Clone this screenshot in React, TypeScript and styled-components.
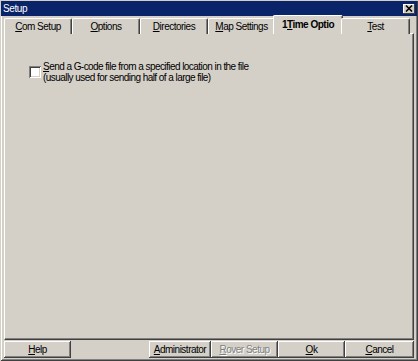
import React from "react";
import styled, { createGlobalStyle, css } from "styled-components";

const Global = createGlobalStyle`
  html, body { margin: 0; padding: 0; background: #d4d0c8; }
  body { font-family: "Liberation Sans", Arial, sans-serif; font-size: 10px; color: #000; }
`;

const Window = styled.div`
  width: 418px;
  height: 361px;
  box-sizing: border-box;
  background: #d4d0c8;
  display: flex;
  flex-direction: column;
  padding: 1px 1px 3px 1px;
  box-shadow: inset 1px 1px 0 #d4d0c8, inset -1px -1px 0 #404040, inset 2px 2px 0 #fff, inset -2px -2px 0 #808080;
`;

const TitleBar = styled.div`
  height: 15px;
  background: #0a246a;
  color: #fff;
  display: flex;
  align-items: center;
  justify-content: space-between;
  padding: 0 2px 0 2px;
  flex: none;
`;

const TitleText = styled.span`
  font-size: 10px;
  letter-spacing: -0.4px;
  line-height: 15px;
`;

const CloseBtn = styled.div`
  width: 12px;
  height: 10px;
  background: #d4d0c8;
  box-sizing: border-box;
  box-shadow: inset -1px -1px 0 #404040, inset 1px 1px 0 #fff;
  display: flex;
  align-items: center;
  justify-content: center;
  svg { display: block; }
`;

const Body = styled.div`
  flex: 1;
  display: flex;
  flex-direction: column;
  padding: 0 3px 0 3px;
`;

const TabRow = styled.div`
  height: 18px;
  display: flex;
  align-items: flex-end;
  position: relative;
  z-index: 1;
  margin-bottom: -1px;
`;

const Tab = styled.div<{ $w: number; $active?: boolean }>`
  width: ${(p) => p.$w}px;
  box-sizing: border-box;
  height: 16px;
  display: flex;
  align-items: center;
  justify-content: center;
  background: #d4d0c8;
  border-top: 1px solid #fff;
  border-left: 1px solid #fff;
  border-right: 1px solid #404040;
  box-shadow: inset -1px 0 0 #808080;
  border-top-left-radius: 2px;
  border-top-right-radius: 2px;
  letter-spacing: -0.5px;
  ${(p) =>
    p.$active &&
    css`
      height: 19px;
      font-weight: bold;
      margin: 0 -2px;
      width: ${p.$w + 2}px;
      padding-bottom: 2px;
    `}
`;

const Panel = styled.div`
  flex: 1;
  box-sizing: border-box;
  border-top: 1px solid #fff;
  border-left: 1px solid #fff;
  border-right: 1px solid #404040;
  border-bottom: 1px solid #404040;
  box-shadow: inset -1px -1px 0 #808080;
  padding: 27px 0 0 24px;
`;

const CheckRow = styled.label`
  display: flex;
  align-items: flex-start;
  gap: 2px;
`;

const CheckBox = styled.span`
  width: 12px;
  height: 12px;
  box-sizing: border-box;
  background: #fff;
  margin-top: 5px;
  flex: none;
  box-shadow: inset 1px 1px 0 #808080, inset -1px -1px 0 #fff, inset 2px 2px 0 #404040, inset -2px -2px 0 #d4d0c8;
`;

const CheckText = styled.span`
  line-height: 11px;
  letter-spacing: -0.55px;
`;

const ButtonRow = styled.div`
  display: flex;
  height: 17px;
  margin-top: 1px;
`;

const Spacer = styled.div`
  flex: 1;
`;

const Button = styled.div<{ $w: number; $disabled?: boolean }>`
  width: ${(p) => p.$w}px;
  box-sizing: border-box;
  display: flex;
  align-items: center;
  justify-content: center;
  background: #d4d0c8;
  box-shadow: inset -1px -1px 0 #404040, inset 1px 1px 0 #fff, inset -2px -2px 0 #808080;
  letter-spacing: -0.5px;
  ${(p) =>
    p.$disabled &&
    css`
      color: #808080;
      text-shadow: 1px 1px 0 #fff;
    `}
`;

const U = styled.span`
  text-decoration: underline;
`;

const tabs: { label: React.ReactNode; w: number; active?: boolean }[] = [
  { label: <><U>C</U>om Setup</>, w: 68 },
  { label: <><U>O</U>ptions</>, w: 68 },
  { label: <><U>D</U>irectories</>, w: 68 },
  { label: <><U>M</U>ap Settings</>, w: 67 },
  { label: <>1<U>T</U>ime Optio</>, w: 68, active: true },
  { label: <><U>T</U>est</>, w: 69 },
];

export default function App() {
  return (
    <>
      <Global />
      <Window>
        <TitleBar>
          <TitleText>Setup</TitleText>
          <CloseBtn>
            <svg width="8" height="7" viewBox="0 0 8 7">
              <path d="M1 0.5 L7 6.5 M7 0.5 L1 6.5" stroke="#000" strokeWidth="1.6" />
            </svg>
          </CloseBtn>
        </TitleBar>
        <Body>
          <TabRow>
            {tabs.map((t, i) => (
              <Tab key={i} $w={t.w} $active={t.active}>
                <span>{t.label}</span>
              </Tab>
            ))}
          </TabRow>
          <Panel>
            <CheckRow>
              <CheckBox />
              <CheckText>
                <U>S</U>end a G-code file from a specified location in the file
                <br />
                (usually used for sending half of a large file)
              </CheckText>
            </CheckRow>
          </Panel>
          <ButtonRow>
            <Button $w={67}>
              <span><U>H</U>elp</span>
            </Button>
            <Spacer />
            <Button $w={62}>
              <span><U>A</U>dministrator</span>
            </Button>
            <Button $w={67} $disabled>
              <span><U>R</U>over Setup</span>
            </Button>
            <Button $w={67}>
              <span><U>O</U>k</span>
            </Button>
            <Button $w={69}>
              <span><U>C</U>ancel</span>
            </Button>
          </ButtonRow>
        </Body>
      </Window>
    </>
  );
}
